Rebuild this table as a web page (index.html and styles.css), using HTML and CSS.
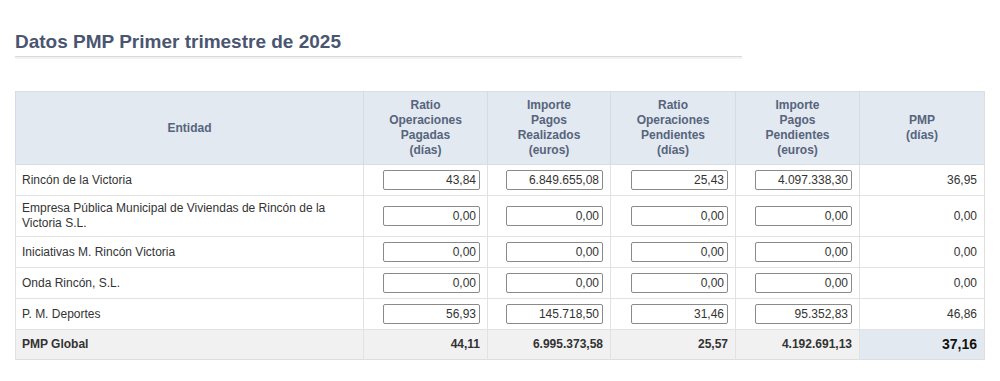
FILE: index.html
```html
<!DOCTYPE html>
<html lang="es">
<head>
<meta charset="utf-8">
<title>Datos PMP</title>
<link rel="stylesheet" href="styles.css">
</head>
<body>
<div class="page">
  <h2 class="title">Datos PMP Primer trimestre de 2025</h2>
  <table class="pmp">
    <colgroup>
      <col class="c-ent"><col class="c1"><col class="c2"><col class="c3"><col class="c4"><col class="c5">
    </colgroup>
    <thead>
      <tr>
        <th>Entidad</th>
        <th>Ratio<br>Operaciones<br>Pagadas<br>(días)</th>
        <th>Importe<br>Pagos<br>Realizados<br>(euros)</th>
        <th>Ratio<br>Operaciones<br>Pendientes<br>(días)</th>
        <th>Importe<br>Pagos<br>Pendientes<br>(euros)</th>
        <th>PMP<br>(días)</th>
      </tr>
    </thead>
    <tbody>
      <tr>
        <td class="ent">Rincón de la Victoria</td>
        <td class="num"><input class="val" type="text" value="43,84" readonly></td>
        <td class="num"><input class="val" type="text" value="6.849.655,08" readonly></td>
        <td class="num"><input class="val" type="text" value="25,43" readonly></td>
        <td class="num"><input class="val" type="text" value="4.097.338,30" readonly></td>
        <td class="num">36,95</td>
      </tr>
      <tr>
        <td class="ent">Empresa Pública Municipal de Viviendas de Rincón de la Victoria S.L.</td>
        <td class="num"><input class="val" type="text" value="0,00" readonly></td>
        <td class="num"><input class="val" type="text" value="0,00" readonly></td>
        <td class="num"><input class="val" type="text" value="0,00" readonly></td>
        <td class="num"><input class="val" type="text" value="0,00" readonly></td>
        <td class="num">0,00</td>
      </tr>
      <tr>
        <td class="ent">Iniciativas M. Rincón Victoria</td>
        <td class="num"><input class="val" type="text" value="0,00" readonly></td>
        <td class="num"><input class="val" type="text" value="0,00" readonly></td>
        <td class="num"><input class="val" type="text" value="0,00" readonly></td>
        <td class="num"><input class="val" type="text" value="0,00" readonly></td>
        <td class="num">0,00</td>
      </tr>
      <tr>
        <td class="ent">Onda Rincón, S.L.</td>
        <td class="num"><input class="val" type="text" value="0,00" readonly></td>
        <td class="num"><input class="val" type="text" value="0,00" readonly></td>
        <td class="num"><input class="val" type="text" value="0,00" readonly></td>
        <td class="num"><input class="val" type="text" value="0,00" readonly></td>
        <td class="num">0,00</td>
      </tr>
      <tr>
        <td class="ent">P. M. Deportes</td>
        <td class="num"><input class="val" type="text" value="56,93" readonly></td>
        <td class="num"><input class="val" type="text" value="145.718,50" readonly></td>
        <td class="num"><input class="val" type="text" value="31,46" readonly></td>
        <td class="num"><input class="val" type="text" value="95.352,83" readonly></td>
        <td class="num">46,86</td>
      </tr>
    </tbody>
    <tfoot>
      <tr class="total">
        <td class="ent">PMP Global</td>
        <td class="num">44,11</td>
        <td class="num">6.995.373,58</td>
        <td class="num">25,57</td>
        <td class="num">4.192.691,13</td>
        <td class="num pmp-total">37,16</td>
      </tr>
    </tfoot>
  </table>
</div>
</body>
</html>
```
FILE: styles.css
```css
html, body {
  margin: 0;
  padding: 0;
  background: #ffffff;
}

body {
  font-family: "Liberation Sans", Arial, sans-serif;
  font-size: 12px;
  color: #333333;
}

.page {
  padding: 31px 0 0 15px;
}

.title {
  width: 727px;
  margin: 0 0 34px 0;
  padding: 0 0 3px 0;
  font-size: 19px;
  line-height: 22px;
  font-weight: bold;
  color: #4a5671;
  border-bottom: 1px solid #d9d9d9;
  box-shadow: 0 2px 0 #f2f2f2;
}

.pmp {
  width: 969px;
  border-collapse: collapse;
  table-layout: fixed;
  border: 1px solid #dedede;
}

.c-ent { width: 348px; }
.c1 { width: 124px; }
.c2 { width: 123px; }
.c3 { width: 125px; }
.c4 { width: 124px; }
.c5 { width: 125px; }

.pmp th {
  background: #e3e9f0;
  color: #56647d;
  font-weight: bold;
  font-size: 12px;
  line-height: 15px;
  padding: 6px 6px 6px;
  text-align: center;
  vertical-align: middle;
  border-left: 1px solid #d5dbe3;
  border-bottom: 1px solid #d8dde4;
}

.pmp td {
  padding: 5px 7px 5px 6px;
  line-height: 15px;
  vertical-align: middle;
  border-top: 1px solid #e2e2e2;
  border-left: 1px solid #e2e2e2;
}

.pmp td.num {
  text-align: right;
}

.val {
  display: block;
  margin-left: auto;
  box-sizing: border-box;
  width: 97px;
  height: 20px;
  padding: 0 3px;
  border: 1px solid #8a8a8a;
  border-radius: 2px;
  font-family: "Liberation Sans", Arial, sans-serif;
  font-size: 12px;
  color: #333333;
  text-align: right;
  background: #ffffff;
}

.total td {
  background: #f1f1f1;
  font-weight: bold;
  padding-top: 7px;
  padding-bottom: 7px;
  color: #333333;
}

.total td.pmp-total {
  background: #e3e9f0;
  font-size: 14px;
  color: #111111;
}
```
